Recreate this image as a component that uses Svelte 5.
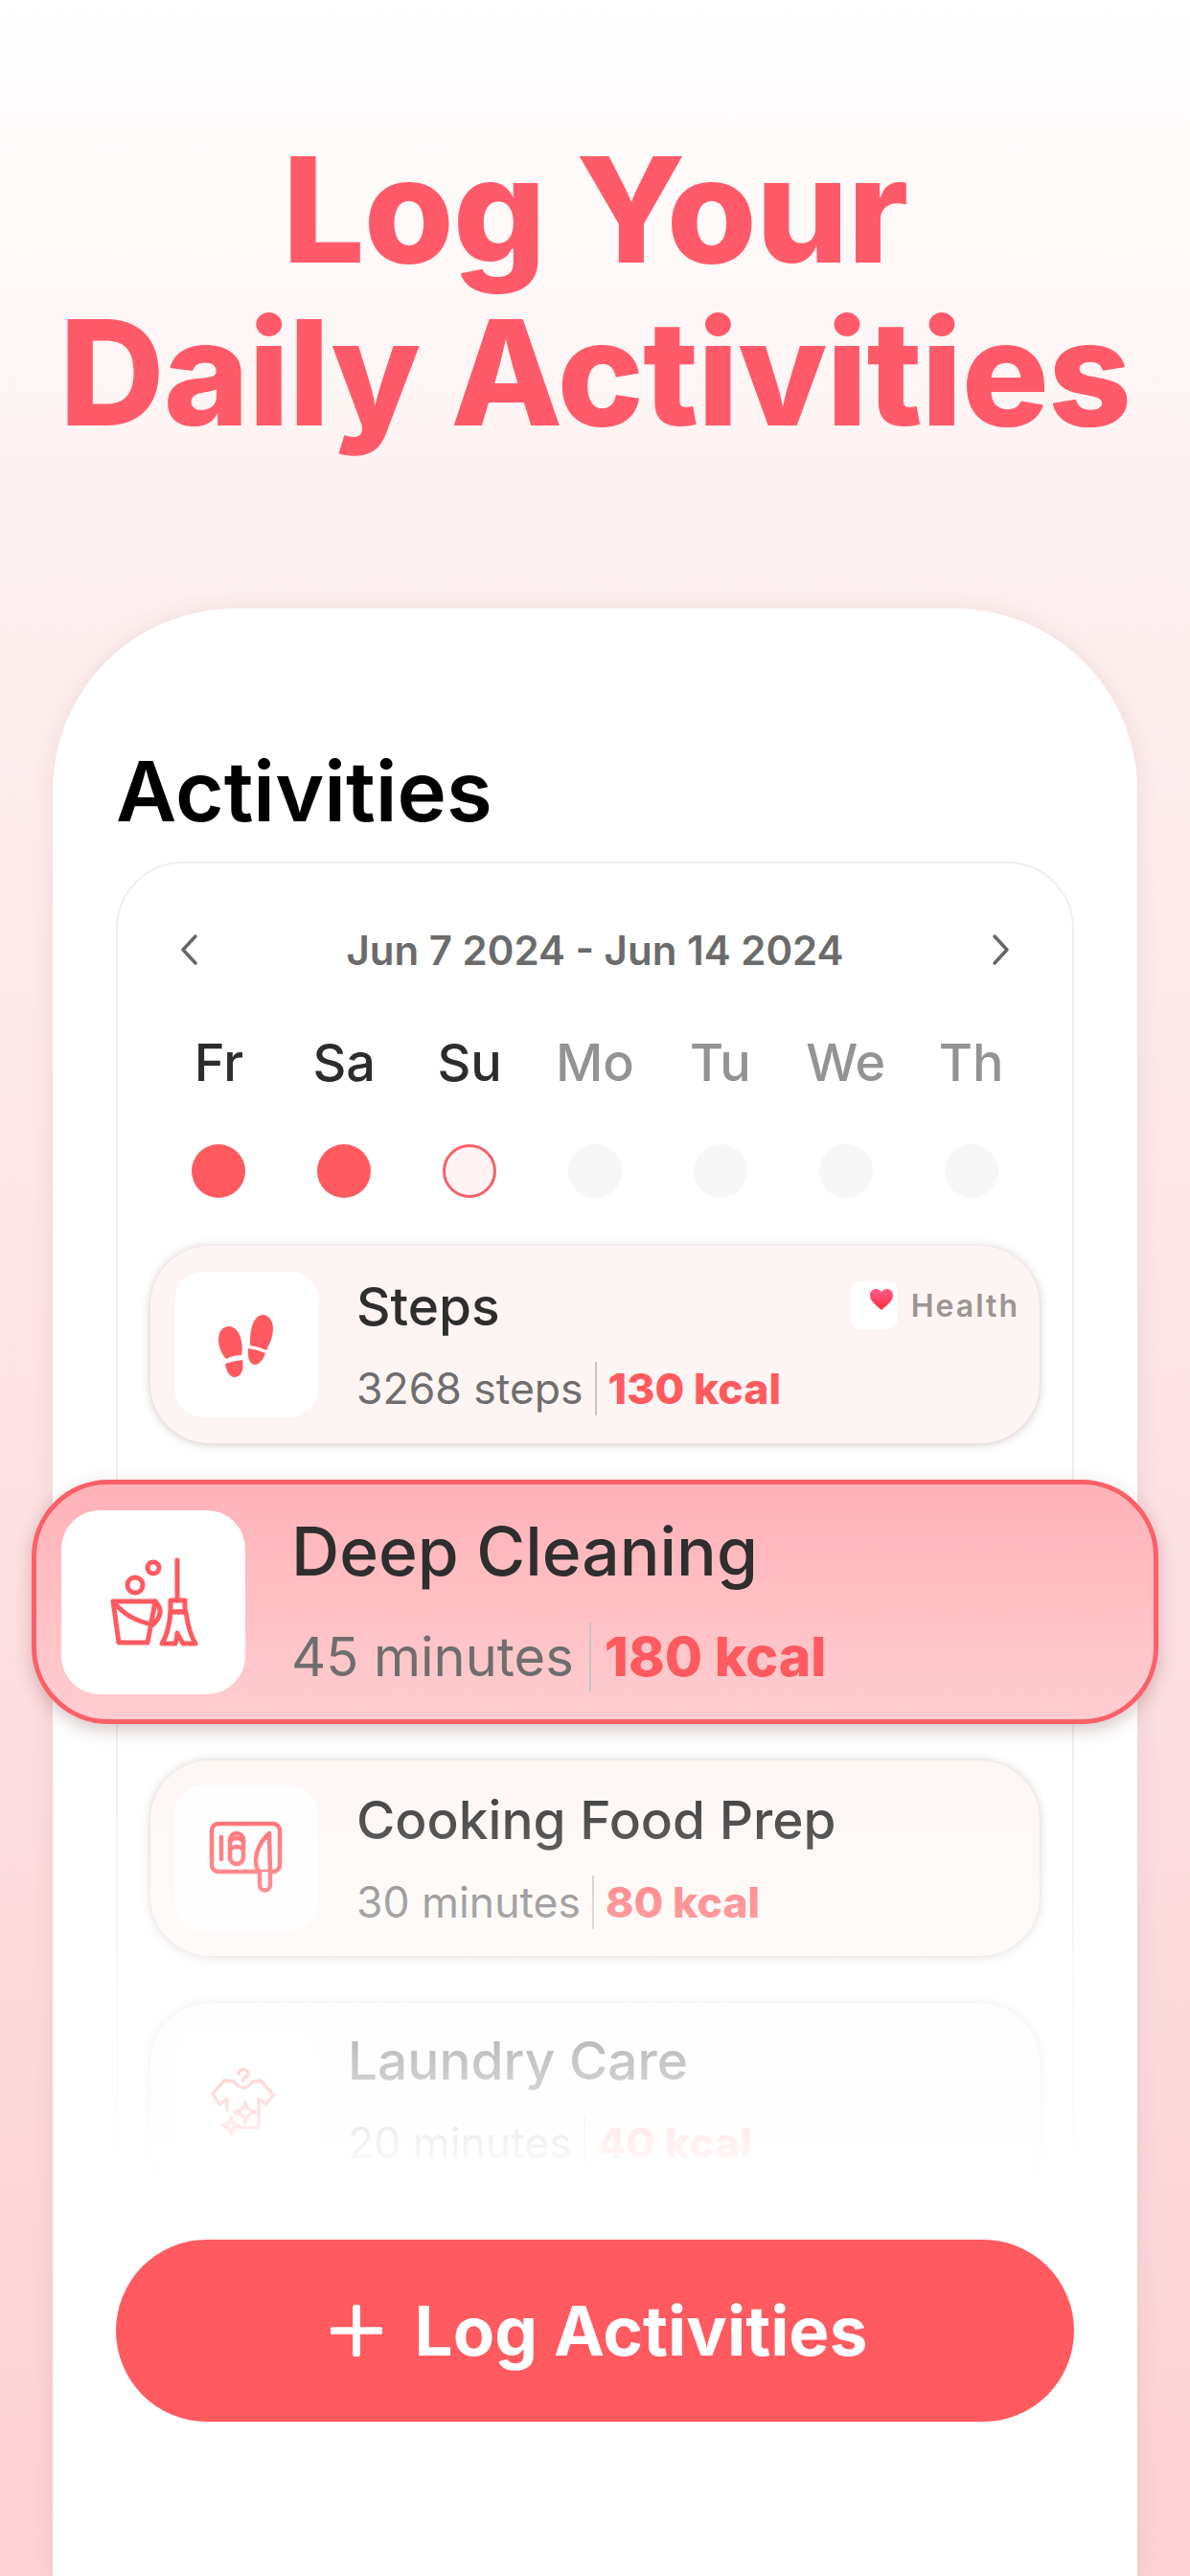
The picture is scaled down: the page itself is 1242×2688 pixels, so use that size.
<script>
  const days = [
    { label: 'Fr', state: 'done' },
    { label: 'Sa', state: 'done' },
    { label: 'Su', state: 'today' },
    { label: 'Mo', state: 'idle' },
    { label: 'Tu', state: 'idle' },
    { label: 'We', state: 'idle' },
    { label: 'Th', state: 'idle' }
  ];
</script>

{#snippet stepsIcon()}
  <svg viewBox="0 0 150 152" class="icon" fill="#ff5a60">
    <path d="M54 91C48 84 46 77 46 71C46 62 51 57 57 57C64 57 69 65 70 73C71 79 71 83 70 87Q62 87 54 91Z" />
    <path d="M53 96Q62 93 71 92C73 101 70 110 63 110C57 110 54 103 53 96Z" />
    <path d="M79 77C79 70 79 64 81 57C83 50 87 45 92 45C99 45 103 52 103 59C103 68 99 76 96 82Q88 78 79 77Z" />
    <path d="M77 80Q86 81 95 85C93 91 89 97 84 97C78 97 76 88 77 80Z" />
  </svg>
{/snippet}

{#snippet cleaningIcon()}
  <svg viewBox="0 0 192 192" class="icon" fill="none" stroke="#ff5a60" stroke-width="5" stroke-linejoin="round" stroke-linecap="round">
    <circle cx="96" cy="60" r="6" />
    <circle cx="77" cy="78" r="8" />
    <path d="M54 95H98L90 138H60Z" />
    <path d="M55 96Q70 115 96 119" />
    <path d="M98 95Q109 106 96 119" />
    <path d="M121 52V94" />
    <path d="M114 94H129V106H114Z" />
    <path d="M114 106C113 120 110 131 105 139H119Q121 133 121 128Q124 134 127 139H140C135 131 132 120 130 106Z" />
  </svg>
{/snippet}

{#snippet knifeIcon()}
  <svg viewBox="0 0 150 152" class="icon" fill="none" stroke="#ff5a60" stroke-width="4.5" stroke-linejoin="round" stroke-linecap="round">
    <rect x="39" y="40" width="71" height="50" rx="7" />
    <path d="M49 54V77" />
    <rect x="58" y="50" width="14" height="32" rx="7" />
    <path d="M58 58Q65 52 72 58M58 67Q65 61 72 67" />
    <path d="M99 50C90 58 85 69 85 78C85 84 86 88 89 90H100Z" fill="#fff" />
    <path d="M89 90V104A5.500 5.500 0 0 0 100 104V90" fill="#fff" />
  </svg>
{/snippet}

{#snippet laundryIcon()}
  <svg viewBox="0 0 150 152" class="icon" fill="none" stroke="#ff5a60" stroke-width="3.5" stroke-linejoin="round" stroke-linecap="round">
    <path d="M67 47C67 41 77 41 77 47C77 50 72 50 72 54" />
    <path d="M62 55Q72 68 82 55" />
    <path d="M62 55L52 54L40 68L47 79L55 73V85" />
    <path d="M82 55L90 54L103 69L96 79L88 73V103H65" />
    <path d="M74 76Q75 86 85 87Q75 88 74 99Q73 88 63 87Q73 86 74 76Z" />
    <path d="M59 92Q60 100 67 101Q60 102 59 110Q58 102 50 101Q58 100 59 92Z" />
  </svg>
{/snippet}

{#snippet heart()}
  <svg viewBox="0 0 24 22" class="heart">
    <defs>
      <linearGradient id="heartFill" x1="0" y1="0" x2="0" y2="1">
        <stop offset="0" stop-color="#ff5f8e" />
        <stop offset="1" stop-color="#ff2b3c" />
      </linearGradient>
    </defs>
    <path d="M12 22C5 16 0 12 0 6.500C0 2.500 3 0 6.200 0C8.600 0 10.800 1.200 12 3.200C13.200 1.200 15.400 0 17.800 0C21 0 24 2.500 24 6.500C24 12 19 16 12 22Z" fill="url(#heartFill)" />
  </svg>
{/snippet}

<div class="page">
  <h1>Log Your<br />Daily Activities</h1>

  <section class="sheet">
    <h2>Activities</h2>

    <div class="panel">
      <div class="range">
        <svg viewBox="0 0 24 36" class="chev"><path d="M19 4L6 18L19 32" /></svg>
        <span>Jun 7 2024 - Jun 14 2024</span>
        <svg viewBox="0 0 24 36" class="chev"><path d="M5 4L18 18L5 32" /></svg>
      </div>

      <div class="days">
        {#each days as day}
          <div class="day {day.state}">
            <span class="name">{day.label}</span>
            <span class="dot"></span>
          </div>
        {/each}
      </div>

      <div class="list">
        <article class="row steps">
          <div class="thumb">{@render stepsIcon()}</div>
          <div class="body">
            <div class="head">
              <h3>Steps</h3>
              <div class="source">
                <span class="badge">{@render heart()}</span>
                <span>Health</span>
              </div>
            </div>
            <p><span class="amount">3268 steps</span><b>130 kcal</b></p>
          </div>
        </article>

        <article class="row active">
          <div class="thumb">{@render cleaningIcon()}</div>
          <div class="body">
            <h3>Deep Cleaning</h3>
            <p><span class="amount">45 minutes</span><b>180 kcal</b></p>
          </div>
        </article>

        <article class="row cooking">
          <div class="thumb">{@render knifeIcon()}</div>
          <div class="body">
            <h3>Cooking Food Prep</h3>
            <p><span class="amount">30 minutes</span><b>80 kcal</b></p>
          </div>
        </article>

        <article class="row last">
          <div class="thumb">{@render laundryIcon()}</div>
          <div class="body">
            <h3>Laundry Care</h3>
            <p><span class="amount">20 minutes</span><b>40 kcal</b></p>
          </div>
        </article>
      </div>

      <div class="fade"></div>
    </div>

    <button class="log">
      <svg viewBox="0 0 56 56" class="plus"><path d="M28 3V53M3 28H53" /></svg>
      Log Activities
    </button>
  </section>
</div>

<style>
  :global(body) {
    margin: 0;
    font-family: Inter, "Liberation Sans", sans-serif;
  }

  .page {
    width: 1242px;
    height: 2688px;
    overflow: hidden;
    display: flex;
    flex-direction: column;
    background: linear-gradient(180deg, #ffffff 0%, #fdeeee 25%, #fcd2d5 100%);
  }

  h1 {
    margin: 0;
    padding-top: 134px;
    text-align: center;
    font-size: 152px;
    line-height: 170px;
    font-weight: 800;
    letter-spacing: -1px;
    color: #ff5a6a;
  }

  .sheet {
    flex: 1;
    margin: 161px 55px 0;
    padding: 140px 66px 0;
    background: #fff;
    border-radius: 190px 190px 0 0;
    box-shadow: 0 0 24px rgba(120, 70, 70, 0.1);
  }

  h2 {
    margin: 0 0 22px;
    font-size: 87px;
    line-height: 102px;
    font-weight: 600;
    color: #000;
  }

  .panel {
    position: relative;
    height: 1400px;
    box-sizing: border-box;
    padding: 0 34px;
    border: 2px solid #efefef;
    border-radius: 70px 70px 0 0;
  }

  .range {
    display: flex;
    align-items: center;
    justify-content: space-between;
    height: 90px;
    margin-top: 45px;
    padding: 0 28px;
    font-size: 42px;
    font-weight: 600;
    color: #6b6b6b;
  }

  .chev {
    width: 24px;
    height: 36px;
    fill: none;
    stroke: #666;
    stroke-width: 3.5;
    stroke-linecap: round;
    stroke-linejoin: round;
  }

  .days {
    display: grid;
    grid-template-columns: repeat(7, 1fr);
    margin: 0 6px;
    padding-top: 41px;
  }

  .day {
    display: flex;
    flex-direction: column;
    align-items: center;
    gap: 53px;
  }

  .name {
    font-size: 54px;
    line-height: 64px;
    font-weight: 500;
    color: #2c2c2c;
  }

  .dot {
    width: 56px;
    height: 56px;
    box-sizing: border-box;
    border-radius: 50%;
    background: #f7f7f7;
  }

  .idle .name {
    color: #939393;
  }

  .done .dot {
    background: #ff5a60;
  }

  .today .dot {
    background: #fff3f3;
    border: 3px solid #f4616a;
  }

  .list {
    display: flex;
    flex-direction: column;
    gap: 38px;
    margin-top: 50px;
  }

  .row {
    display: flex;
    align-items: center;
    gap: 40px;
    height: 206px;
    padding: 0 21px 0 25px;
    border-radius: 62px;
    background: #fdf5f3;
    box-shadow: 0 1px 10px rgba(100, 60, 60, 0.3);
  }

  .thumb {
    flex: none;
    width: 150px;
    height: 152px;
    border-radius: 30px;
    background: #fff;
  }

  .icon {
    display: block;
    width: 100%;
    height: 100%;
  }

  .body {
    flex: 1;
    min-width: 0;
    display: flex;
    flex-direction: column;
    gap: 24px;
  }

  .head {
    display: flex;
    align-items: flex-start;
    justify-content: space-between;
  }

  h3 {
    margin: 0;
    font-size: 55px;
    line-height: 68px;
    font-weight: 500;
    color: #2e2e2e;
  }

  p {
    margin: 0;
    display: flex;
    align-items: center;
    font-size: 44.5px;
    line-height: 56px;
    color: #6e6e6e;
  }

  .amount {
    padding-right: 12px;
    border-right: 2px solid #c9c4c3;
  }

  p b {
    padding-left: 12px;
    font-weight: 800;
    color: #ff5a60;
  }

  .source {
    display: flex;
    align-items: center;
    gap: 14px;
    margin-top: 8px;
    font-size: 32px;
    font-weight: 600;
    letter-spacing: 2px;
    color: #9b9693;
  }

  .badge {
    display: flex;
    justify-content: flex-end;
    width: 49px;
    height: 50px;
    box-sizing: border-box;
    padding: 8px 5px 0 0;
    border-radius: 10px;
    background: #fff;
  }

  .heart {
    width: 24px;
    height: 22px;
  }

  .active {
    position: relative;
    z-index: 2;
    height: 255px;
    box-sizing: border-box;
    margin: 0 -124px;
    padding: 0 26px;
    gap: 48px;
    border: 5px solid #fb5f68;
    border-radius: 80px;
    background: linear-gradient(180deg, #ffb2b7 0%, #ffcdd0 100%);
    box-shadow: 0 6px 18px rgba(110, 50, 50, 0.28);
  }

  .active .thumb {
    width: 192px;
    height: 192px;
    border-radius: 40px;
  }

  .active h3 {
    font-size: 69.500px;
    line-height: 80px;
  }

  .active p {
    font-size: 56px;
    line-height: 72px;
  }

  .active .body {
    gap: 34px;
  }

  .active .amount {
    padding-right: 16px;
  }

  .active b {
    padding-left: 14px;
    font-size: 57px;
  }

  .cooking {
    height: 204px;
    background: #fdf7f4;
    margin-bottom: 11px;
  }

  .cooking .thumb {
    background: #fffefe;
  }

  .last {
    gap: 31px;
    background: #fefbfa;
  }

  .last .body {
    margin-top: -6px;
  }

  .fade {
    position: absolute;
    z-index: 3;
    left: -3px;
    right: -3px;
    top: 925px;
    bottom: -16px;
    background: linear-gradient(180deg, rgba(255, 255, 255, 0) 0%, #fff 92%);
    pointer-events: none;
  }

  .log {
    position: relative;
    z-index: 4;
    display: flex;
    align-items: center;
    justify-content: center;
    gap: 34px;
    width: 100%;
    height: 190px;
    margin-top: 38px;
    padding: 0 0 0 8px;
    border: 0;
    border-radius: 95px;
    background: #ff5a60;
    color: #fff;
    font-family: inherit;
    font-size: 71px;
    font-weight: 700;
  }

  .plus {
    width: 54px;
    height: 54px;
    fill: none;
    stroke: #fff;
    stroke-width: 8;
    stroke-linecap: round;
  }
</style>
